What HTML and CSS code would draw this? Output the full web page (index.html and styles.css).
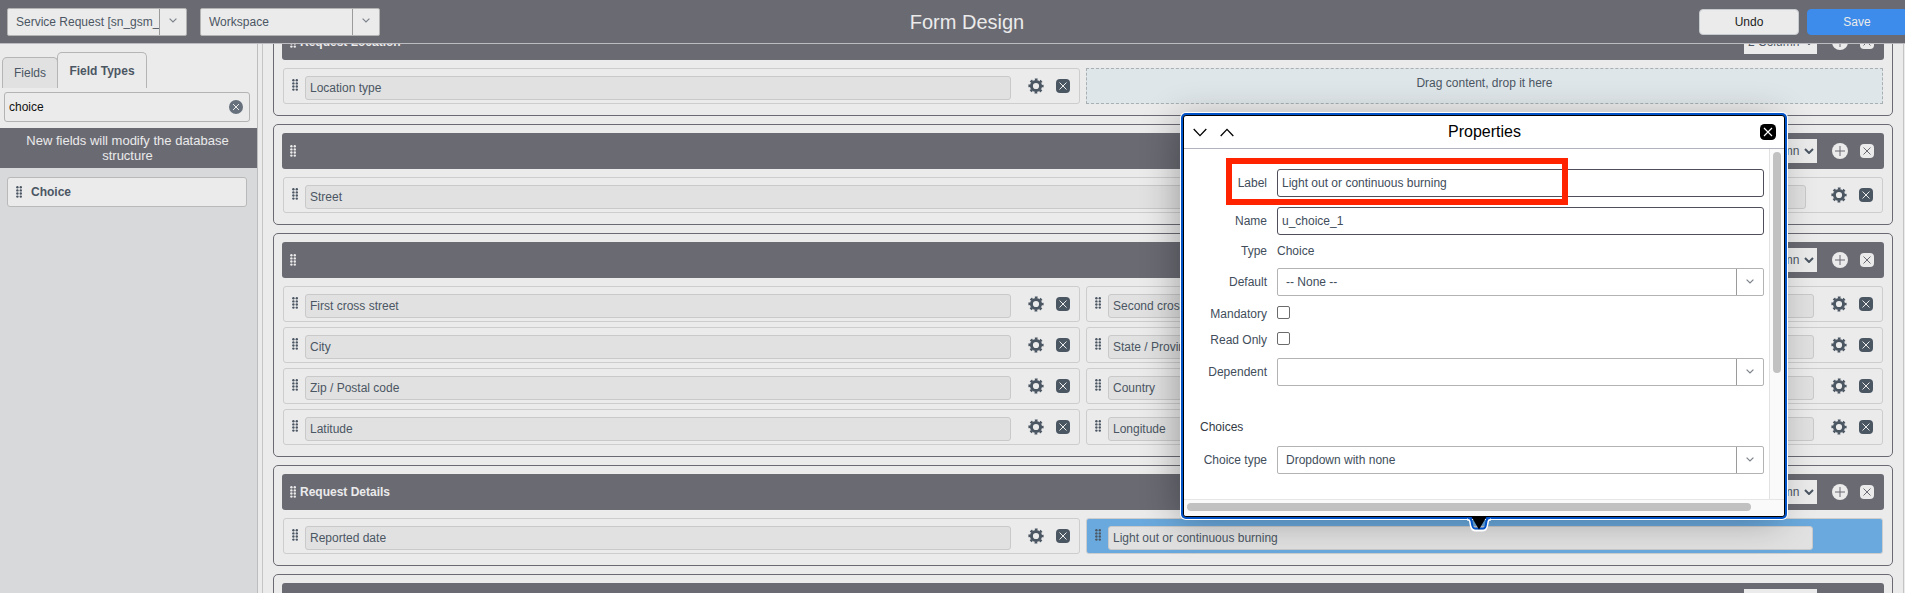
FILE: index.html
```html
<!DOCTYPE html>
<html lang="en">
<head>
<meta charset="utf-8">
<title>Form Design</title>
<link rel="stylesheet" href="styles.css">
</head>
<body>
<svg class="sprite" aria-hidden="true">
  <symbol id="grip" viewBox="0 0 6 12">
    <g fill="currentColor"><circle cx="1.4" cy="1.3" r="1.2"/><circle cx="4.8" cy="1.3" r="1.2"/><circle cx="1.4" cy="4.4" r="1.2"/><circle cx="4.8" cy="4.4" r="1.2"/><circle cx="1.4" cy="7.5" r="1.2"/><circle cx="4.8" cy="7.5" r="1.2"/><circle cx="1.4" cy="10.6" r="1.2"/><circle cx="4.8" cy="10.6" r="1.2"/></g>
  </symbol>
  <symbol id="gear" viewBox="0 0 16 16">
    <g fill="none" stroke="currentColor"><circle cx="8" cy="8" r="4.6" stroke-width="3"/><circle cx="8" cy="8" r="6.6" stroke-width="2" stroke-dasharray="2.7 2.484" stroke-dashoffset="1.35"/></g>
  </symbol>
  <symbol id="remove" viewBox="0 0 14 14">
    <rect width="14" height="14" rx="4" fill="currentColor"/><path class="mark" d="M3.5 3.5l7 7M10.5 3.5l-7 7"/>
  </symbol>
  <symbol id="clear" viewBox="0 0 14 14">
    <circle cx="7" cy="7" r="7" fill="currentColor"/><path class="mark" d="M4 4l6 6M10 4l-6 6"/>
  </symbol>
  <symbol id="add" viewBox="0 0 16 16">
    <circle cx="8" cy="8" r="8" fill="currentColor"/><path class="mark" d="M8 3v10M3 8h10"/>
  </symbol>
  <symbol id="chevron" viewBox="0 0 8 5">
    <path d="M.6.6L4 4 7.4.6" fill="none" stroke="currentColor" stroke-width="1.2"/>
  </symbol>
  <symbol id="bold-chevron" viewBox="0 0 10 6">
    <path d="M1 1l4 4 4-4" fill="none" stroke="currentColor" stroke-width="2"/>
  </symbol>
</svg>

<header class="topbar">
  <div class="topbar-left">
    <div class="combo combo-top">
      <select aria-label="Table"><option>Service Request [sn_gsm_service_request]</option></select>
      <span class="combo-arrow"><svg><use href="#chevron"/></svg></span>
    </div>
    <div class="combo combo-top">
      <select aria-label="View"><option>Workspace</option></select>
      <span class="combo-arrow"><svg><use href="#chevron"/></svg></span>
    </div>
  </div>
  <h1 class="topbar-title">Form Design</h1>
  <div class="topbar-right">
    <button class="btn" type="button">Undo</button>
    <button class="btn btn-primary" type="button">Save</button>
  </div>
</header>

<div class="workspace">
  <aside class="sidebar">
    <div class="sidebar-head">
      <div class="tabs" role="tablist">
        <button class="tab" type="button" role="tab">Fields</button>
        <button class="tab tab-active" type="button" role="tab" aria-selected="true">Field Types</button>
      </div>
      <div class="search">
        <input type="text" value="choice" aria-label="Filter field types">
        <button class="icon-btn" type="button" aria-label="Clear filter"><svg class="i14"><use href="#clear"/></svg></button>
      </div>
    </div>
    <p class="notice">New fields will modify the database structure</p>
    <div class="type-item"><svg class="grip"><use href="#grip"/></svg>Choice</div>
  </aside>

  <main class="canvas">
    <div class="sections">
      <section class="section">
        <div class="section-head">
          <svg class="grip"><use href="#grip"/></svg><h2>Request Location</h2>
          <div class="layout-select"><select aria-label="Layout"><option>2 Column</option></select><svg><use href="#bold-chevron"/></svg></div>
          <button class="icon-btn" type="button" aria-label="Add section"><svg class="i16"><use href="#add"/></svg></button>
          <button class="icon-btn" type="button" aria-label="Remove section"><svg class="i14"><use href="#remove"/></svg></button>
        </div>
        <div class="rows two">
          <div class="field"><svg class="grip"><use href="#grip"/></svg><input readonly aria-label="Field" value="Location type"><button class="icon-btn" type="button" aria-label="Properties"><svg class="i16"><use href="#gear"/></svg></button><button class="icon-btn" type="button" aria-label="Remove"><svg class="i14"><use href="#remove"/></svg></button></div>
          <div class="dropzone">Drag content, drop it here</div>
        </div>
      </section>

      <section class="section">
        <div class="section-head">
          <svg class="grip"><use href="#grip"/></svg><h2></h2>
          <div class="layout-select"><select aria-label="Layout"><option>1 Column</option></select><svg><use href="#bold-chevron"/></svg></div>
          <button class="icon-btn" type="button" aria-label="Add section"><svg class="i16"><use href="#add"/></svg></button>
          <button class="icon-btn" type="button" aria-label="Remove section"><svg class="i14"><use href="#remove"/></svg></button>
        </div>
        <div class="rows one">
          <div class="field"><svg class="grip"><use href="#grip"/></svg><input readonly aria-label="Field" value="Street"><button class="icon-btn" type="button" aria-label="Properties"><svg class="i16"><use href="#gear"/></svg></button><button class="icon-btn" type="button" aria-label="Remove"><svg class="i14"><use href="#remove"/></svg></button></div>
        </div>
      </section>

      <section class="section">
        <div class="section-head">
          <svg class="grip"><use href="#grip"/></svg><h2></h2>
          <div class="layout-select"><select aria-label="Layout"><option>2 Column</option></select><svg><use href="#bold-chevron"/></svg></div>
          <button class="icon-btn" type="button" aria-label="Add section"><svg class="i16"><use href="#add"/></svg></button>
          <button class="icon-btn" type="button" aria-label="Remove section"><svg class="i14"><use href="#remove"/></svg></button>
        </div>
        <div class="rows two">
          <div class="field"><svg class="grip"><use href="#grip"/></svg><input readonly aria-label="Field" value="First cross street"><button class="icon-btn" type="button" aria-label="Properties"><svg class="i16"><use href="#gear"/></svg></button><button class="icon-btn" type="button" aria-label="Remove"><svg class="i14"><use href="#remove"/></svg></button></div>
          <div class="field"><svg class="grip"><use href="#grip"/></svg><input readonly aria-label="Field" value="Second cross street"><button class="icon-btn" type="button" aria-label="Properties"><svg class="i16"><use href="#gear"/></svg></button><button class="icon-btn" type="button" aria-label="Remove"><svg class="i14"><use href="#remove"/></svg></button></div>
          <div class="field"><svg class="grip"><use href="#grip"/></svg><input readonly aria-label="Field" value="City"><button class="icon-btn" type="button" aria-label="Properties"><svg class="i16"><use href="#gear"/></svg></button><button class="icon-btn" type="button" aria-label="Remove"><svg class="i14"><use href="#remove"/></svg></button></div>
          <div class="field"><svg class="grip"><use href="#grip"/></svg><input readonly aria-label="Field" value="State / Province"><button class="icon-btn" type="button" aria-label="Properties"><svg class="i16"><use href="#gear"/></svg></button><button class="icon-btn" type="button" aria-label="Remove"><svg class="i14"><use href="#remove"/></svg></button></div>
          <div class="field"><svg class="grip"><use href="#grip"/></svg><input readonly aria-label="Field" value="Zip / Postal code"><button class="icon-btn" type="button" aria-label="Properties"><svg class="i16"><use href="#gear"/></svg></button><button class="icon-btn" type="button" aria-label="Remove"><svg class="i14"><use href="#remove"/></svg></button></div>
          <div class="field"><svg class="grip"><use href="#grip"/></svg><input readonly aria-label="Field" value="Country"><button class="icon-btn" type="button" aria-label="Properties"><svg class="i16"><use href="#gear"/></svg></button><button class="icon-btn" type="button" aria-label="Remove"><svg class="i14"><use href="#remove"/></svg></button></div>
          <div class="field"><svg class="grip"><use href="#grip"/></svg><input readonly aria-label="Field" value="Latitude"><button class="icon-btn" type="button" aria-label="Properties"><svg class="i16"><use href="#gear"/></svg></button><button class="icon-btn" type="button" aria-label="Remove"><svg class="i14"><use href="#remove"/></svg></button></div>
          <div class="field"><svg class="grip"><use href="#grip"/></svg><input readonly aria-label="Field" value="Longitude"><button class="icon-btn" type="button" aria-label="Properties"><svg class="i16"><use href="#gear"/></svg></button><button class="icon-btn" type="button" aria-label="Remove"><svg class="i14"><use href="#remove"/></svg></button></div>
        </div>
      </section>

      <section class="section">
        <div class="section-head">
          <svg class="grip"><use href="#grip"/></svg><h2>Request Details</h2>
          <div class="layout-select"><select aria-label="Layout"><option>2 Column</option></select><svg><use href="#bold-chevron"/></svg></div>
          <button class="icon-btn" type="button" aria-label="Add section"><svg class="i16"><use href="#add"/></svg></button>
          <button class="icon-btn" type="button" aria-label="Remove section"><svg class="i14"><use href="#remove"/></svg></button>
        </div>
        <div class="rows two">
          <div class="field"><svg class="grip"><use href="#grip"/></svg><input readonly aria-label="Field" value="Reported date"><button class="icon-btn" type="button" aria-label="Properties"><svg class="i16"><use href="#gear"/></svg></button><button class="icon-btn" type="button" aria-label="Remove"><svg class="i14"><use href="#remove"/></svg></button></div>
          <div class="field field-selected"><svg class="grip"><use href="#grip"/></svg><input readonly aria-label="Field" value="Light out or continuous burning"></div>
        </div>
      </section>

      <section class="section">
        <div class="section-head">
          <svg class="grip"><use href="#grip"/></svg><h2></h2>
          <div class="layout-select"><select aria-label="Layout"><option>2 Column</option></select><svg><use href="#bold-chevron"/></svg></div>
          <button class="icon-btn" type="button" aria-label="Add section"><svg class="i16"><use href="#add"/></svg></button>
          <button class="icon-btn" type="button" aria-label="Remove section"><svg class="i14"><use href="#remove"/></svg></button>
        </div>
      </section>
    </div>
  </main>
</div>

<div class="popover" role="dialog" aria-labelledby="popover-title">
  <div class="popover-head">
    <div class="popover-nav">
      <button class="icon-btn" type="button" aria-label="Next"><svg width="14" height="9" viewBox="0 0 14 9"><path d="M.7 1L7 7.6 13.3 1" fill="none" stroke="#000" stroke-width="1.3"/></svg></button>
      <button class="icon-btn" type="button" aria-label="Previous"><svg width="14" height="9" viewBox="0 0 14 9"><path d="M.7 8L7 1.4 13.3 8" fill="none" stroke="#000" stroke-width="1.3"/></svg></button>
    </div>
    <h2 id="popover-title">Properties</h2>
    <button class="icon-btn popover-close" type="button" aria-label="Close"><svg class="i16"><use href="#remove"/></svg></button>
  </div>
  <div class="popover-body">
    <form class="props">
      <label for="p-label">Label</label><input class="text" id="p-label" type="text" value="Light out or continuous burning">
      <label for="p-name">Name</label><input class="text" id="p-name" type="text" value="u_choice_1">
      <span class="label value-row">Type</span><span class="value-row">Choice</span>
      <label for="p-default">Default</label>
      <div class="combo"><select id="p-default"><option>-- None --</option></select><span class="combo-arrow"><svg><use href="#chevron"/></svg></span></div>
      <label for="p-mandatory">Mandatory</label><input class="check" id="p-mandatory" type="checkbox">
      <label for="p-readonly">Read Only</label><input class="check" id="p-readonly" type="checkbox">
      <label for="p-dependent">Dependent</label>
      <div class="combo"><select id="p-dependent"><option></option></select><span class="combo-arrow"><svg><use href="#chevron"/></svg></span></div>
      <h3>Choices</h3>
      <label for="p-type">Choice type</label>
      <div class="combo"><select id="p-type"><option>Dropdown with none</option></select><span class="combo-arrow"><svg><use href="#chevron"/></svg></span></div>
    </form>
    <div class="vtrack"><span></span></div>
    <div class="htrack"><span></span></div>
  </div>
  <div class="highlight"></div>
  <svg class="pointer" width="28" height="18" viewBox="0 0 28 18">
    <path d="M2 3.500C5 3.500 5 5 5.500 8C6 12 7 14.500 10 14.500H18C21 14.500 22 12 22.500 8C23 5 23 3.500 26 3.500" fill="none" stroke="#fff" stroke-width="2"/>
    <path d="M3 2C6 2 6.500 4 7 8C7.500 11.500 8 12.500 10 12.500H18C20 12.500 20.500 11.500 21 8C21.500 4 22 2 25 2" fill="none" stroke="#0052c8" stroke-width="2"/>
    <path d="M6 0H22L14 13.500Z" fill="#000"/>
  </svg>
</div>
</body>
</html>
```
FILE: styles.css
```css
* { box-sizing: border-box; }

body {
  margin: 0;
  height: 100vh;
  overflow: hidden;
  position: relative;
  display: flex;
  flex-direction: column;
  background: #ebebeb;
  color: #4b5663;
  font: 12px/16px "Liberation Sans", Arial, sans-serif;
}

h1, h2, h3, p { margin: 0; }
input, select, button { font: inherit; color: inherit; margin: 0; }
select { appearance: none; border: 0; border-radius: 0; background: transparent; }
svg { display: block; }

.sprite { position: absolute; width: 0; height: 0; }
.mark { fill: none; stroke: var(--mark, #ebebeb); stroke-width: 1; }
.i14 { width: 14px; height: 14px; }
.i16 { width: 16px; height: 16px; }
.grip { width: 6px; height: 12px; flex: none; }
.icon-btn { border: 0; padding: 0; background: none; flex: none; }

/* Top bar */
.topbar {
  flex: none;
  height: 44px;
  display: grid;
  grid-template-columns: 1fr auto 1fr;
  align-items: center;
  padding-left: 7px;
  background: #6a6a73;
  border-bottom: 1px solid #bcbcc0;
}
.topbar-left { display: flex; gap: 13px; }
.topbar-title { margin-left: 22px; color: #ebebeb; font-size: 20px; line-height: 24px; font-weight: 400; }
.topbar-right { display: flex; justify-content: flex-end; gap: 8px; }
.btn {
  width: 100px;
  height: 26px;
  padding: 0;
  border: 1px solid #c5cacf;
  border-radius: 4px;
  background: #ebebeb;
  color: #1c1c1c;
}
.btn-primary { width: 98px; padding-left: 2px; border-color: #3d8bea; border-radius: 4px 0 0 4px; background: #3d8bea; color: #ebebeb; }

/* Select with a separate arrow cell */
.combo {
  display: grid;
  height: 28px;
  border: 1px solid #b3b3b3;
  border-radius: 2px;
}
.combo select { grid-area: 1 / 1; min-width: 0; width: 100%; padding: 0 27px 0 8px; }
.combo-arrow {
  grid-area: 1 / 1;
  justify-self: end;
  width: 27px;
  display: grid;
  place-items: center;
  border-left: 1px solid #9b9b9b;
  color: #7d838b;
  pointer-events: none;
}
.combo-arrow svg { width: 8px; height: 5px; margin-bottom: 2px; }
.combo-top { width: 180px; background: #ebebeb; }

/* Sidebar */
.workspace { flex: 1; min-height: 0; display: flex; }
.sidebar {
  flex: none;
  width: 258px;
  border-right: 1px solid #bdbdbd;
  background: #d8d9da;
}
.sidebar-head { padding: 8px 7px 6px 2px; background: #ebebeb; }
.tabs { display: flex; align-items: flex-end; }
.tab {
  width: 56px;
  height: 31px;
  padding: 0;
  border: 1px solid #b5b5b5;
  border-bottom: 0;
  border-radius: 5px 5px 0 0;
  background: #e1e1e1;
}
.tab-active { width: 90px; height: 36px; margin-left: -1px; background: #ebebeb; font-weight: 700; }
.search {
  display: flex;
  align-items: center;
  height: 30px;
  margin: 4px 0 0 2px;
  padding-right: 6px;
  border: 1px solid #b3b3b3;
  border-radius: 3px;
  color: #66717d;
}
.search input { flex: 1; min-width: 0; height: 28px; border: 0; padding: 0 4px; background: transparent; color: #111; outline: 0; }
.notice { padding: 5px 18px 5px 16px; background: #6a6a73; color: #ebebeb; font-size: 13px; line-height: 15px; text-align: center; }
.type-item {
  display: flex;
  align-items: center;
  gap: 9px;
  height: 30px;
  margin: 9px 10px 0 7px;
  padding: 0 8px;
  border: 1px solid #b9b9b9;
  border-radius: 3px;
  background: #ebebeb;
  font-weight: 700;
}

/* Form canvas */
.canvas {
  flex: 1;
  min-width: 0;
  overflow: hidden;
  margin: 0 1px 0 4px;
  padding: 0 10px;
  border: solid #c4c4c4;
  border-width: 0 1px;
}
.sections { display: grid; gap: 8px; margin-top: -29px; }
.section { padding: 8px 8px 11px; border: 1px solid #6a6a73; border-radius: 5px; }
.section-head {
  display: flex;
  align-items: center;
  height: 36px;
  padding: 0 10px 0 8px;
  border-radius: 3px;
  background: #6a6a73;
  color: #ebebeb;
  --mark: #6a6a73;
}
.section-head h2 { flex: 1; padding-left: 4px; font-size: 12px; line-height: 16px; font-weight: 700; }
.section-head .icon-btn { margin-left: 12px; }
.layout-select { display: grid; align-items: center; width: 73px; height: 24px; margin-right: 3px; background: #ebebeb; color: #4b5663; }
.layout-select select { grid-area: 1 / 1; height: 24px; padding: 0 0 0 4px; }
.layout-select svg { grid-area: 1 / 1; justify-self: end; width: 10px; height: 6px; margin-right: 3px; pointer-events: none; }
.rows { display: grid; gap: 5px 6px; padding: 8px 1px 0; }
.two { grid-template-columns: 1fr 1fr; }
.field {
  display: flex;
  align-items: center;
  height: 36px;
  padding: 0 9px 0 8px;
  border: 1px solid #cdcdcd;
  border-radius: 3px;
}
.field .grip { margin-bottom: 2px; }
.field input {
  flex: 1;
  min-width: 0;
  height: 24px;
  margin: 4px 17px 0 7px;
  padding: 0 4px;
  border: 1px solid #c9c9c9;
  border-radius: 3px;
  background: #e1e1e1;
}
.one .field input { margin-right: 25px; }
.field .icon-btn { margin-right: 12px; }
.field .icon-btn:last-child { margin-right: 0; }
.field-selected { background: #6aa9dd; }
.field-selected input { margin-right: 60px; }
.dropzone { padding-top: 6px; border: 1px dashed #a9b0b3; background: #dfe6e9; text-align: center; }

/* Properties popover */
.popover {
  position: absolute;
  top: 115px;
  right: 120px;
  width: 602px;
  border: 1px solid #000;
  border-radius: 3px;
  background: #fff;
  color: #414d5b;
  box-shadow: 0 0 0 2px #0052c8, 0 0 0 3px #fff, -6px 4px 36px rgba(0, 0, 0, 0.3);
}
.popover-head {
  display: grid;
  grid-template-columns: 1fr auto 1fr;
  align-items: center;
  height: 33px;
  padding: 0 8px 0 9px;
  border-bottom: 1px solid #b0b3bb;
}
.popover-nav { display: flex; gap: 13px; }
.popover-head h2 { color: #000; font-size: 16px; line-height: 20px; font-weight: 400; }
.popover-close { justify-self: end; color: #000; --mark: #fff; }
.popover-body { display: grid; grid-template-columns: 1fr 15px; grid-template-rows: 350px 17px; background: #fafafa; border-radius: 0 0 3px 3px; }
.props {
  display: grid;
  grid-template-columns: 73px 1fr;
  align-content: start;
  align-items: center;
  gap: 10px;
  padding: 20px 5px 20px 10px;
  background: #fff;
}
.props label, .label { text-align: right; }
.text { height: 28px; padding: 0 4px; border: 1px solid #4f4f5c; border-radius: 3px; background: #fff; }
.value-row { line-height: 13px; }
.check {
  appearance: none;
  align-self: start;
  width: 13px;
  height: 13px;
  margin-bottom: 3px;
  border: 1px solid #6b6b6b;
  border-radius: 2px;
  background: #fff;
}
.props h3 { grid-column: 1 / -1; margin: 23px 0 1px; padding-left: 6px; font-size: 12px; line-height: 16px; font-weight: 400; color: #333a44; }
.vtrack { border-left: 1px solid #e2e2e2; padding: 3px; }
.vtrack span { display: block; width: 8px; height: 221px; border-radius: 4px; background: #c1c1c1; }
.htrack { grid-column: 1 / -1; border-top: 1px solid #e6e6e6; padding: 3px 33px 0 3px; }
.htrack span { display: block; height: 8px; border-radius: 4px; background: #c1c1c1; }
.highlight {
  position: absolute;
  top: 42px;
  left: 42px;
  width: 342px;
  height: 47px;
  border: 6px solid #ff2300;
  pointer-events: none;
}
.pointer { position: absolute; top: 100%; left: 281px; }
```
